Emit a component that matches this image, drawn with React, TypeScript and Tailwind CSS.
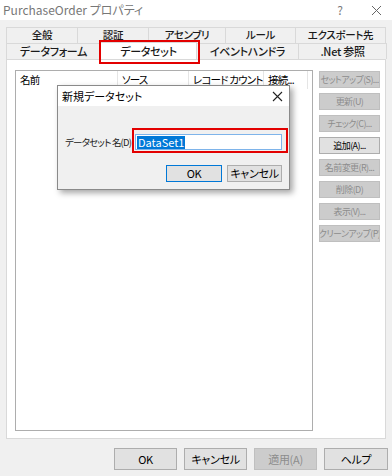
import React from 'react';

const font = {
    fontFamily: '"Noto Sans CJK JP", "Noto Sans", sans-serif',
    fontFeatureSettings: '"palt"',
};

const row1 = [
    { label: '全般', w: 71 },
    { label: '認証', w: 71 },
    { label: 'アセンブリ', w: 77 },
    { label: 'ルール', w: 70 },
    { label: 'エクスポート先', w: 90 },
];

const row2 = [
    { label: 'データフォーム', w: 94 },
    { label: 'データセット', w: 96, active: true },
    { label: 'イベントハンドラ', w: 102 },
    { label: '.Net 参照', w: 88 },
];

const sideButtons = [
    { label: 'セットアップ(S)...', enabled: false },
    { label: '更新(U)', enabled: false },
    { label: 'チェック(C)...', enabled: false },
    { label: '追加(A)...', enabled: true },
    { label: '名前変更(R)...', enabled: false },
    { label: '削除(D)', enabled: false },
    { label: '表示(V)...', enabled: false },
    { label: 'クリーンアップ(P)', enabled: false },
];

const columns = [
    { label: '名前', w: 102 },
    { label: 'ソース', w: 71 },
    { label: 'レコード カウント', w: 75 },
    { label: '接続...', w: 44 },
];

function Tab({ label, w, active, top }: { label: string; w: number; active?: boolean; top?: boolean }) {
    return (
        <div
            className={`flex justify-center whitespace-nowrap font-medium tracking-[-0.3px] text-[#1a1a1a] border-t border-r border-[#d9d9d9] ${top ? 'items-start text-[10.5px] leading-[11px] pt-[1px]' : 'items-center text-[11px] leading-[13px]'} ${active ? 'bg-white h-[17px] -mt-[1px] relative z-10' : 'bg-[#f0f0f0] h-[16px]'}`}
            style={{ width: w }}
        >
            {label}
        </div>
    );
}

function DialogButton({ label, w, state, small }: { label: string; w: number; state: 'normal' | 'disabled' | 'default'; small?: boolean }) {
    const cls =
        state === 'disabled'
            ? 'bg-[#cccccc] border-[#bfbfbf] text-[#8c8c8c]'
            : state === 'default'
            ? 'bg-[#e1e1e1] border-[#0078d7] text-black'
            : 'bg-[#e1e1e1] border-[#adadad] text-black';
    return (
        <div
            className={`flex items-center justify-center overflow-hidden whitespace-nowrap border ${small ? 'text-[9px] tracking-[-0.6px]' : 'text-[11px] tracking-[-0.3px]'} ${cls}`}
            style={{ width: w, height: '100%' }}
        >
            {label}
        </div>
    );
}

export default function App() {
    return (
        <div className="relative w-[392px] h-[476px] bg-[#f0f0f0] overflow-hidden" style={font}>
            {/* title bar */}
            <div className="h-[20px] bg-white flex items-center justify-between pl-[3px] pr-[10px]">
                <span className="text-[12px] text-[#777777]">PurchaseOrder プロパティ</span>
                <div className="flex items-center gap-[28px] text-[#7a7a7a]">
                    <span className="text-[12px]">?</span>
                    <svg width="11" height="11" viewBox="0 0 11 11">
                        <path d="M1 1L10 10M10 1L1 10" stroke="#666" strokeWidth="1" />
                    </svg>
                </div>
            </div>

            {/* tabs */}
            <div className="pt-[7px] pl-[6px]">
                <div className="flex border-l border-[#d9d9d9] w-fit">
                    {row1.map(t => (
                        <Tab key={t.label} label={t.label} w={t.w} top />
                    ))}
                </div>
                <div className="flex border-l border-[#d9d9d9] w-fit">
                    {row2.map(t => (
                        <Tab key={t.label} label={t.label} w={t.w} active={t.active} />
                    ))}
                </div>

                {/* panel */}
                <div className="w-[380px] h-[380px] bg-white border border-[#d9d9d9] flex pl-[8px] pt-[10px] pb-[8px] gap-[6px]">
                    <div className="w-[298px] h-[361px] border border-[#adadad] bg-white">
                        <div className="flex h-[18px]">
                            {columns.map(c => (
                                <div
                                    key={c.label}
                                    className="flex items-center overflow-hidden whitespace-pre pl-[4px] text-[10.5px] tracking-[-0.8px] text-black border-r border-[#e5e5e5]"
                                    style={{ width: c.w }}
                                >
                                    {c.label}
                                </div>
                            ))}
                        </div>
                    </div>
                    <div className="flex flex-col gap-[5px] w-[61px] pt-[1px]">
                        {sideButtons.map(b => (
                            <div key={b.label} className="h-[17px]">
                                <DialogButton label={b.label} w={61} state={b.enabled ? 'normal' : 'disabled'} small />
                            </div>
                        ))}
                    </div>
                </div>
            </div>

            {/* bottom buttons */}
            <div className="flex justify-end gap-[7px] pr-[4px] mt-[9px] h-[22px]">
                <DialogButton label="OK" w={63} state="normal" />
                <DialogButton label="キャンセル" w={63} state="normal" />
                <DialogButton label="適用(A)" w={63} state="disabled" />
                <DialogButton label="ヘルプ" w={64} state="normal" />
            </div>

            {/* annotation on active tab */}
            <div className="absolute left-[99px] top-[40px] w-[101px] h-[24px] border-2 border-[#e30000] z-20" />

            {/* new dataset dialog */}
            <div className="absolute left-[57px] top-[85px] w-[233px] h-[105px] bg-[#f0f0f0] border border-[#8a8a8a] shadow-[3px_3px_6px_rgba(0,0,0,0.35)] z-30 flex flex-col">
                <div className="h-[20px] bg-white flex items-center justify-between pl-[4px] pr-[6px]">
                    <span className="text-[11px] text-black">新規データセット</span>
                    <svg width="11" height="11" viewBox="0 0 11 11">
                        <path d="M1 1L10 10M10 1L1 10" stroke="#222" strokeWidth="1.1" />
                    </svg>
                </div>
                <div className="flex items-center mt-[28px] pl-[7px] h-[16px]">
                    <span className="text-[9.5px] tracking-[-0.8px] whitespace-nowrap text-[#222] w-[70px]">データセット 名(D)</span>
                    <div className="w-[147px] h-[16px] bg-white border border-[#7eb4ea] flex items-center pl-[1px]">
                        <span className="bg-[#0078d7] text-white text-[11px] leading-[13px] px-[1px]">DataSet1</span>
                    </div>
                </div>
                <div className="flex justify-end gap-[5px] pr-[7px] mt-[15px] h-[17px]">
                    <DialogButton label="OK" w={56} state="default" />
                    <DialogButton label="キャンセル" w={55} state="normal" />
                </div>
                {/* annotation on name field */}
                <div className="absolute left-[74px] top-[42px] w-[156px] h-[25px] border-2 border-[#e30000]" />
            </div>
        </div>
    );
}
